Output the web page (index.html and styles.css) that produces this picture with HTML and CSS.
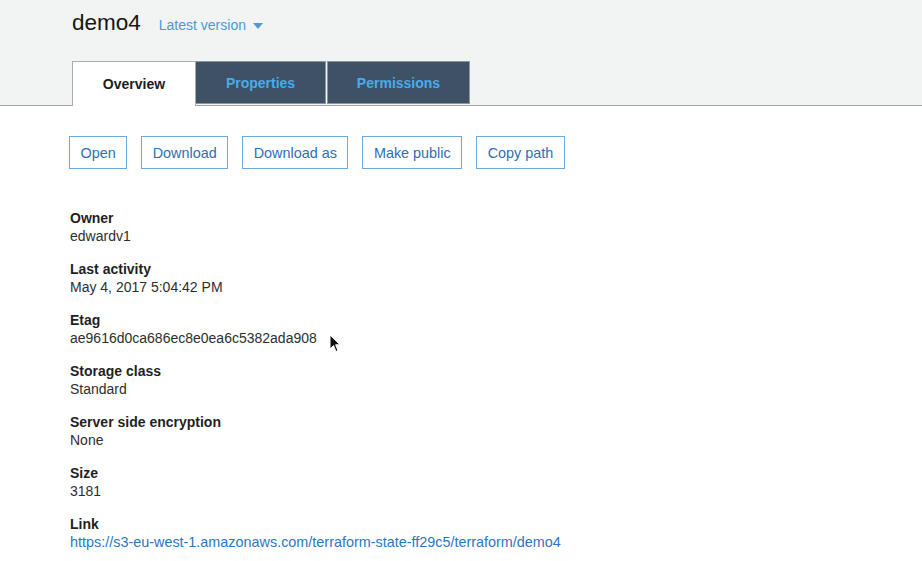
FILE: index.html
```html
<!DOCTYPE html>
<html>
<head>
<meta charset="utf-8">
<link rel="stylesheet" href="styles.css">
</head>
<body>
<div class="header">
  <div class="title-row">
    <span class="title">demo4</span>
    <span class="version">Latest version <span class="caret"></span></span>
  </div>
  <div class="tabs">
    <div class="tab active">Overview</div>
    <div class="tab dark t-props">Properties</div>
    <div class="tab dark t-perms">Permissions</div>
  </div>
</div>
<div class="content">
  <div class="actions">
    <button class="btn">Open</button>
    <button class="btn">Download</button>
    <button class="btn">Download as</button>
    <button class="btn">Make public</button>
    <button class="btn">Copy path</button>
  </div>
  <div class="fields">
    <div class="field"><div class="label">Owner</div><div class="value">edwardv1</div></div>
    <div class="field"><div class="label">Last activity</div><div class="value">May 4, 2017 5:04:42 PM</div></div>
    <div class="field"><div class="label">Etag</div><div class="value">ae9616d0ca686ec8e0ea6c5382ada908</div></div>
    <div class="field"><div class="label">Storage class</div><div class="value">Standard</div></div>
    <div class="field"><div class="label">Server side encryption</div><div class="value">None</div></div>
    <div class="field"><div class="label">Size</div><div class="value">3181</div></div>
    <div class="field"><div class="label">Link</div><div class="value"><a class="link" href="#">https://s3-eu-west-1.amazonaws.com/terraform-state-ff29c5/terraform/demo4</a></div></div>
  </div>
</div>
<svg class="cursor" width="12" height="19" viewBox="0 0 12 19"><path d="M1 1 L1 15 L4.5 11.5 L7 17.5 L9 16.6 L6.6 10.8 L11 10.8 Z" fill="#111" stroke="#fff" stroke-width="1"/></svg>
</body>
</html>
```
FILE: styles.css
```css
html, body {
  margin: 0;
  padding: 0;
  background: #ffffff;
  font-family: "Liberation Sans", Arial, sans-serif;
  color: #222;
}
.header {
  background: #f2f3f3;
  border-bottom: 1px solid #a3a6a8;
  padding-left: 72px;
  height: 106px;
  box-sizing: border-box;
  display: flex;
  flex-direction: column;
}
.title-row {
  padding-top: 10px;
  height: 51px;
  display: flex;
  align-items: baseline;
}
.title {
  font-size: 22.5px;
  color: #161616;
}
.version {
  margin-left: 18px;
  font-size: 14px;
  color: #4f97d8;
  display: inline-flex;
  align-items: center;
}
.caret {
  display: inline-block;
  width: 0;
  height: 0;
  border-left: 5px solid transparent;
  border-right: 5px solid transparent;
  border-top: 6px solid #4f97d8;
  margin-left: 7px;
  margin-top: 1px;
}
.tabs {
  display: flex;
  align-items: flex-start;
  height: 44px;
}
.tab {
  box-sizing: border-box;
  font-size: 14px;
  font-weight: bold;
  display: flex;
  align-items: center;
  justify-content: center;
}
.tab.active {
  width: 124px;
  height: 45px;
  background: #fff;
  border: 1px solid #a9abad;
  border-bottom: none;
  color: #1d1d1d;
  position: relative;
  z-index: 1;
  padding-bottom: 1px;
}
.tab.dark {
  height: 43px;
  background: #3f5164;
  border: 1px solid #8d969f;
  color: #47acec;
}
.t-props { width: 131px; margin-left: -1px; }
.t-perms { width: 143px; margin-left: 1px; }
.content {
  padding-left: 69px;
  padding-top: 30px;
}
.actions {
  display: flex;
  gap: 14px;
}
.btn {
  height: 33px;
  box-sizing: border-box;
  background: #fff;
  border: 1px solid #6fa8da;
  color: #2c6fb3;
  font-family: "Liberation Sans", Arial, sans-serif;
  font-size: 14.4px;
  padding: 0 10.5px;
  border-radius: 0;
}
.fields {
  margin-top: 40px;
  display: flex;
  flex-direction: column;
  padding-left: 1px;
}
.field {
  margin-bottom: 15px;
  font-size: 14px;
  line-height: 18px;
}
.label {
  font-weight: bold;
  color: #1f1f1f;
}
.value {
  color: #2e2e2e;
}
.link {
  color: #2a77c4;
  text-decoration: none;
  font-size: 14.4px;
}
.cursor {
  position: absolute;
  left: 329px;
  top: 334px;
}
```
